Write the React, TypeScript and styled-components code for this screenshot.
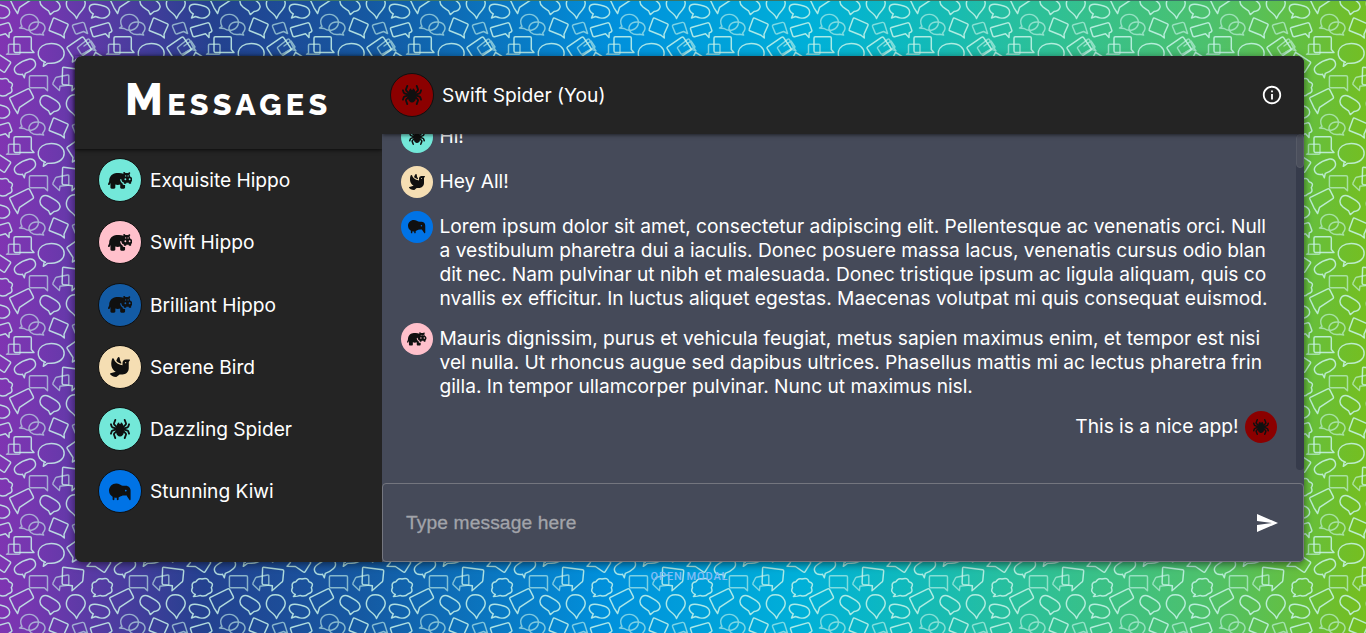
import React from "react";
import styled, { createGlobalStyle } from "styled-components";
import { FaHippo, FaDove, FaSpider, FaKiwiBird } from "react-icons/fa6";
import { MdSend, MdInfoOutline } from "react-icons/md";

const GlobalStyle = createGlobalStyle`
  *, *::before, *::after { box-sizing: border-box; }
  html, body, #root { height: 100%; }
  body {
    margin: 0;
    overflow: hidden;
    font-family: Inter, "Liberation Sans", sans-serif;
    color: #fff;
  }
`;

const Page = styled.div`
  height: 100%;
  display: flex;
  flex-direction: column;
  align-items: center;
  position: relative;
  border-top: 1px solid #3b7566;
  padding: 55px 0 0 13px;
  overflow: hidden;
  background: linear-gradient(
    91deg,
    #8134b2 0%,
    #7537b0 3%,
    #24418f 15.5%,
    #1559a2 27%,
    #0091dc 45%,
    #00b0d8 59%,
    #0eb9be 66%,
    #2bc09a 75%,
    #4dc16d 88%,
    #76be1e 100%
  );
`;

const Backdrop = styled.svg`
  position: absolute;
  left: 0;
  top: -1px;
  width: 100%;
  height: calc(100% + 1px);
`;

const Card = styled.main`
  position: relative;
  flex: none;
  display: grid;
  grid-template-columns: 307px minmax(0, 1fr);
  grid-template-rows: 100%;
  width: 1229px;
  height: 506px;
  border-radius: 7px;
  background: #242424;
  box-shadow: 0 2px 9px rgba(0, 0, 0, 0.55);
`;

const Sidebar = styled.aside`
  display: flex;
  flex-direction: column;
  min-width: 0;
`;

const TitleBar = styled.header`
  height: 93px;
  flex: none;
  padding: 16px 0 0 50px;
  box-shadow: 0 1px 4px rgba(0, 0, 0, 0.75);
`;

const Title = styled.h1`
  margin: 0;
  font-family: Raleway, Lato, sans-serif;
  font-weight: 800;
  font-size: 30.5px;
  line-height: 56px;
  letter-spacing: 4.3px;
  text-transform: uppercase;

  &::first-letter {
    font-size: 44px;
  }
`;

const UserList = styled.ul`
  list-style: none;
  margin: 0;
  padding: 9px 0 0 23px;
  display: flex;
  flex-direction: column;
  gap: 18.3px;
`;

const User = styled.li`
  display: flex;
  align-items: center;
  gap: 8px;
  height: 44px;
  font-size: 19.2px;
  letter-spacing: -0.03px;
`;

const Avatar = styled.span<{ $color: string; $small?: boolean; $zoom: number }>`
  flex: none;
  display: flex;
  align-items: center;
  justify-content: center;
  width: ${(p) => (p.$small ? 32 : 44)}px;
  height: ${(p) => (p.$small ? 32 : 44)}px;
  border-radius: 50%;
  border: ${(p) => (p.$small ? "none" : "1px solid #101010")};
  background: ${(p) => p.$color};
  color: #101010;
  font-size: ${(p) => (p.$small ? 16 : 20)}px;

  svg {
    flex: none;
    width: auto;
    height: ${(p) => p.$zoom}em;
  }
`;

const Chat = styled.section`
  display: flex;
  flex-direction: column;
  min-width: 0;
  min-height: 0;
  border-radius: 0 7px 5px 0;
  overflow: hidden;
  background: #454a59;
`;

const ChatHeader = styled.header`
  position: relative;
  z-index: 1;
  flex: none;
  display: flex;
  align-items: center;
  gap: 8px;
  height: 78px;
  padding: 0 21px 0 8px;
  font-size: 19.2px;
  background: #242424;
  box-shadow: 0 1px 4px rgba(0, 0, 0, 0.6);
`;

const InfoButton = styled.button`
  margin-left: auto;
  padding: 0;
  border: 0;
  background: none;
  color: #fff;
  font-size: 22px;
  display: flex;
`;

const Body = styled.div`
  flex: 1;
  min-height: 0;
  display: flex;
`;

const Messages = styled.div`
  flex: 1;
  display: flex;
  flex-direction: column;
  justify-content: flex-end;
  padding: 0 19px 14px;
  margin-bottom: 13px;
  overflow: hidden;
`;

const Message = styled.div<{ $own?: boolean }>`
  flex: none;
  display: flex;
  flex-direction: ${(p) => (p.$own ? "row-reverse" : "row")};
  align-items: flex-start;
  gap: 6.5px;
  margin-bottom: 13px;
`;

const Text = styled.p`
  margin: 0;
  padding-top: 3px;
  font-size: 19.2px;
  line-height: 24px;
  letter-spacing: -0.02px;
  white-space: pre;
`;

const Track = styled.div`
  width: 8px;
  height: 336px;
  border-radius: 4px;
  background: #363b4b;
`;

const Thumb = styled.div`
  height: 34px;
  border-radius: 4px;
  background: #4b4f5c;
  border: 1px solid #565a66;
`;

const Composer = styled.div`
  flex: none;
  display: flex;
  align-items: center;
  justify-content: space-between;
  height: 79px;
  padding: 0 24px 0 23px;
  border: 1px solid #74767f;
  border-radius: 4px;
`;

const Placeholder = styled.span`
  color: #a2a4aa;
  font-family: "Liberation Sans", sans-serif;
  font-size: 19.2px;
  letter-spacing: 0.12px;
  -webkit-text-stroke: 0.3px #a2a4aa;
`;

const OpenModal = styled.button`
  position: relative;
  margin-top: 8px;
  padding: 0;
  border: 0;
  background: none;
  color: #84bdf6;
  font-family: Roboto, sans-serif;
  font-weight: 500;
  font-size: 11px;
  line-height: 13px;
  letter-spacing: 0.9px;
  text-transform: uppercase;
`;

const icons = { hippo: FaHippo, bird: FaDove, spider: FaSpider, kiwi: FaKiwiBird };
type Animal = keyof typeof icons;

const AnimalAvatar = ({ animal, color, small }: { animal: Animal; color: string; small?: boolean }) => {
  const Icon = icons[animal];
  return (
    <Avatar $color={color} $small={small} $zoom={animal === "hippo" ? 1.22 : animal === "kiwi" ? 1.08 : 1}>
      <Icon />
    </Avatar>
  );
};

const users: { name: string; animal: Animal; color: string }[] = [
  { name: "Exquisite Hippo", animal: "hippo", color: "#73e8d9" },
  { name: "Swift Hippo", animal: "hippo", color: "#ffc0cb" },
  { name: "Brilliant Hippo", animal: "hippo", color: "#135ba5" },
  { name: "Serene Bird", animal: "bird", color: "#f5deb3" },
  { name: "Dazzling Spider", animal: "spider", color: "#73e8d9" },
  { name: "Stunning Kiwi", animal: "kiwi", color: "#0073e6" },
];

const messages: { text: string; animal: Animal; color: string; own?: boolean }[] = [
  { text: "Hi!", animal: "spider", color: "#73e8d9" },
  { text: "Hey All!", animal: "bird", color: "#f5deb3" },
  {
    text: "Lorem ipsum dolor sit amet, consectetur adipiscing elit. Pellentesque ac venenatis orci. Null\na vestibulum pharetra dui a iaculis. Donec posuere massa lacus, venenatis cursus odio blan\ndit nec. Nam pulvinar ut nibh et malesuada. Donec tristique ipsum ac ligula aliquam, quis co\nnvallis ex efficitur. In luctus aliquet egestas. Maecenas volutpat mi quis consequat euismod.",
    animal: "kiwi",
    color: "#0073e6",
  },
  {
    text: "Mauris dignissim, purus et vehicula feugiat, metus sapien maximus enim, et tempor est nisi\nvel nulla. Ut rhoncus augue sed dapibus ultrices. Phasellus mattis mi ac lectus pharetra frin\ngilla. In tempor ullamcorper pulvinar. Nunc ut maximus nisl.",
    animal: "hippo",
    color: "#ffc0cb",
  },
  { text: "This is a nice app!", animal: "spider", color: "#8b0000", own: true },
];

/* One 100px tile of speech bubbles; shapes crossing an edge are repeated on the other side. */
const BubbleTile = () => (
  <g id="bubbles" fill="none" stroke="#c9f5ea" strokeWidth="1.45" strokeLinejoin="round" strokeLinecap="round">
    <g opacity="0.85">
      <path d="M45.5 62.3C34.5 59 35.5 43.7 51.3 43.5C68 43.6 68.8 62.5 51.5 63.3L47.5 63.4L43.3 66.3L44.2 61.8" />
      <path d="M14 51V38Q14 36.7 15.3 36.7H30Q31.3 36.7 31.3 38V49.5L34 52.4H15.3Q14 52.4 14 51" />
      <path d="M54.5 18.2L67.5 23.8Q68.5 24.3 68 25.4L64 34.2L64.3 38L61 35.2L49.7 30.8Q48.8 30.3 49.2 29.3L53 19Q53.5 17.8 54.5 18.2" />
      <path d="M91.4 27.5L107.5 22.9Q109 22.6 109.6 24L111.8 30.2Q112.2 31.5 111 32L109.2 32.8L109 37.5L105.5 33.7L94.5 36.7Q93 37 92.6 35.5L90.5 29Q90.2 27.9 91.4 27.5" />
      <path d="M93.3 13.8C87.5 10.5 88 4 95 4.3Q99 4.7 103.7 6C111 8 111.7 15.2 105 17.7C101.5 19 98 17.4 95.5 16.5L91.5 18L93.3 13.8" />
      <path d="M76.5 18.5Q75.5 15.3 70.5 11.5C62.5 4.5 67.5-5.2 75.3-5.2C83.5-5.2 88.5 3 82.5 9.8Q78 14.5 76.5 18.5" />
      <path d="M48.5 10.8L42.8 6.8C37.5 2.5 40.5-5.5 47-4.3C50-3.5 53.5-1 57 1.3C62.5 5.3 60 11.3 54 11.5L50.3 14.6L48.5 10.8" />
      <path d="M10.4 97.3L27.8 88.9Q29.1 88.4 29.7 89.7L33.3 96.7Q33.8 98 32.8 98.7L19.6 107.3L17.6 113.5L14 107.8L9.8 98.9Q9.3 97.8 10.4 97.3" />
      <path d="M95.3 94.6Q90 92 92.5 87.7Q91 82 96 81.7Q98 77.8 102 79Q107.5 77 109 81.7Q114.3 83 111.3 87.7Q113.5 92.5 108.3 93.7Q105 97.3 100.5 95.5L97.5 96.1L93.4 96.5L95.3 94.6" />
      <path d="M22.5 74.2C14 75.8 12.3 68.5 17 65C20.5 62.2 26 59.7 29.5 59C35.5 58.2 37.3 65 33.5 68.5Q30.5 71.5 25.3 73.4L24.3 77.8L22.5 74.2" />
      <path d="M63.5 67.3L82.7 69.8Q83.8 70 83.7 71L82.8 80.5Q82.7 81.7 81.6 82.3L72 90.8L72.4 85.8L63.4 84.6Q62 84.3 62.1 83L62.6 68.2Q62.7 67.2 63.5 67.3" />
      <path d="M95.5 52.3L110 61.7Q111 62.4 110.4 63.4L105 71.8Q104.4 72.7 103.4 72L95.4 66.5L87 66.2L90 63L95.5 52.3" />
      <path d="M67.6 46.8L81.5 37.3Q82.7 36.5 83.6 37.7L91 48.5Q91.7 49.7 90.5 50.5L78.5 58.5L72.4 62L73 57.5L67.1 48.3Q66.6 47.5 67.6 46.8" />
    </g>
    <g opacity="0.62">
      <path d="M8.5 53V45.3Q8.5 44.3 9.5 44.3H19Q20 44.3 20 45.3V53.3Q20 54.3 19 54.3H6.5L8.5 53" />
      <path d="M73.5 24.8L82.5 22.4Q84 22.2 84.4 23.5L87.6 33.5L83.6 31.5L76.8 34Q75.7 34.2 75.2 33L72.5 26.5Q72.1 25.3 73.5 24.8" />
      <path d="M22 26.3C18 19 24 14.3 29.5 14.4C36 14.6 40 20 37.8 25.4C35 31 28 31.5 24.2 28.5L19.5 28L22 26.3" />
      <path d="M42.6 33.2C48 27.5 43.5 22 37 22.1C30 22 26.5 28.3 31 32.5Q34.5 35.5 39.8 34.2L43.6 35L42.6 33.2" />
      <path d="M30.5 75.8H46.3Q47.4 75.8 47.5 77V90.7L44.3 87.7H30.5Q29.4 87.6 29.4 86.5V77Q29.4 75.8 30.5 75.8" />
      <path d="M56.5 77.3L67.5 75Q68.8 74.7 68.8 76V84Q68.8 85.2 67.6 85.3L60 86.2L59.4 90.5L53.5 85Q52.5 84.3 53 83L55.5 78Q55.8 77.5 56.5 77.3" />
      <path d="M78 47L87.6 39.4Q89 38.6 89.6 39.8L92.3 45.5L96 50.8L91.5 49.4L82.5 54Q81.3 54.5 80.7 53.4L77.6 48.4Q77.2 47.7 78 47" />
      <path d="M84 46L91 41L95 47L86 52" />
    </g>
  </g>
);

const PatternBackdrop = () => (
  <Backdrop aria-hidden="true">
    <defs>
      <BubbleTile />
      <pattern id="tile" width="100" height="100" patternUnits="userSpaceOnUse">
        <use href="#bubbles" />
        <use href="#bubbles" x="-100" />
        <use href="#bubbles" y="-100" />
        <use href="#bubbles" y="100" />
        <use href="#bubbles" x="-100" y="-100" />
      </pattern>
    </defs>
    <rect width="100%" height="100%" fill="url(#tile)" />
  </Backdrop>
);

export default function App() {
  return (
    <Page>
      <GlobalStyle />
      <PatternBackdrop />
      <Card>
        <Sidebar>
          <TitleBar>
            <Title>Messages</Title>
          </TitleBar>
          <UserList>
            {users.map((u) => (
              <User key={u.name}>
                <AnimalAvatar animal={u.animal} color={u.color} />
                {u.name}
              </User>
            ))}
          </UserList>
        </Sidebar>
        <Chat>
          <ChatHeader>
            <AnimalAvatar animal="spider" color="#8b0000" />
            Swift Spider (You)
            <InfoButton aria-label="Info">
              <MdInfoOutline />
            </InfoButton>
          </ChatHeader>
          <Body>
            <Messages>
              {messages.map((m) => (
                <Message key={m.text} $own={m.own}>
                  <AnimalAvatar animal={m.animal} color={m.color} small />
                  <Text>{m.text}</Text>
                </Message>
              ))}
            </Messages>
            <Track>
              <Thumb />
            </Track>
          </Body>
          <Composer>
            <Placeholder>Type message here</Placeholder>
            <MdSend size={24} />
          </Composer>
        </Chat>
      </Card>
      <OpenModal>Open Modal</OpenModal>
    </Page>
  );
}
